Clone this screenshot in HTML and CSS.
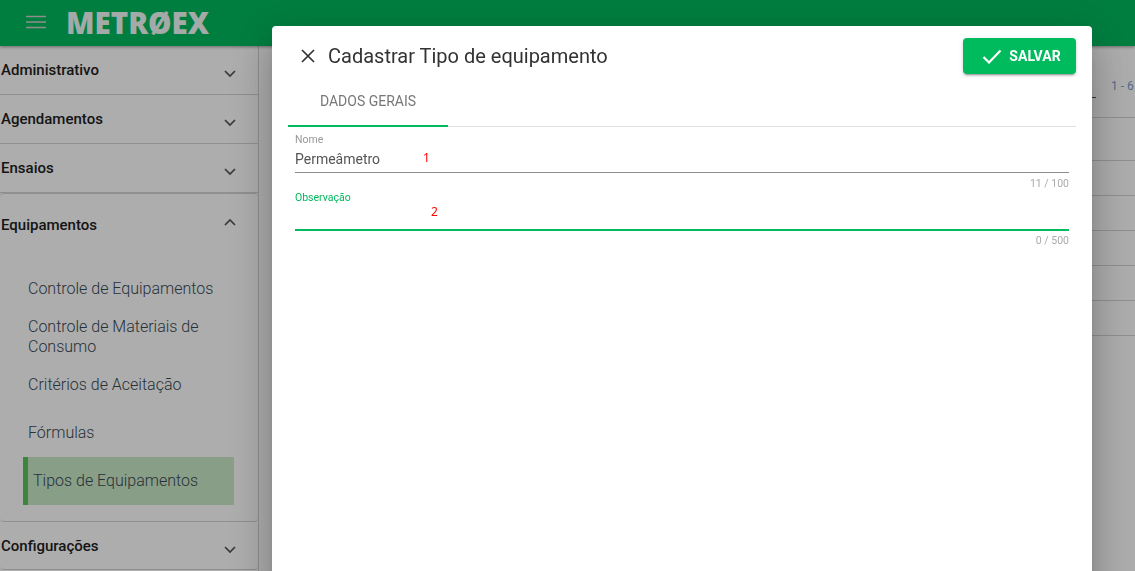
FILE: index.html
```html
<!DOCTYPE html>
<html lang="pt-BR">
<head>
    <meta charset="UTF-8">
    <title>Metroex</title>
    <link rel="stylesheet" href="styles.css">
</head>
<body>
    <header class="topbar">
        <svg class="menu-icon" width="20" height="14" viewBox="0 0 20 14"><path d="M0 1.500h20M0 7h20M0 12.500h20" stroke="#d0d0d0" stroke-width="1.600"/></svg>
        <span class="logo">METRØEX</span>
    </header>

    <div class="page">
        <nav class="sidebar">
            <div class="panel">
                <span>Administrativo</span>
                <svg class="chevron" width="12" height="8" viewBox="0 0 12 8"><path d="M1 1l5 5 5-5" /></svg>
            </div>
            <div class="panel">
                <span>Agendamentos</span>
                <svg class="chevron" width="12" height="8" viewBox="0 0 12 8"><path d="M1 1l5 5 5-5" /></svg>
            </div>
            <div class="panel">
                <span>Ensaios</span>
                <svg class="chevron" width="12" height="8" viewBox="0 0 12 8"><path d="M1 1l5 5 5-5" /></svg>
            </div>
            <div class="panel-open">
                <div class="panel-head">
                    <span>Equipamentos</span>
                    <svg class="chevron up" width="12" height="8" viewBox="0 0 12 8"><path d="M1 7l5-5 5 5" /></svg>
                </div>
                <a class="sub-item first">Controle de Equipamentos</a>
                <a class="sub-item double">Controle de Materiais de Consumo</a>
                <a class="sub-item">Critérios de Aceitação</a>
                <a class="sub-item">Fórmulas</a>
                <a class="sub-item active">Tipos de Equipamentos</a>
            </div>
            <div class="panel last">
                <span>Configurações</span>
                <svg class="chevron" width="12" height="8" viewBox="0 0 12 8"><path d="M1 1l5 5 5-5" /></svg>
            </div>
        </nav>

        <main class="content">
            <div class="pager">
                <span class="pager-select"></span>
                <span class="pager-text">1 - 6</span>
            </div>
            <div class="row row-head"></div>
            <div class="row"></div>
            <div class="row"></div>
            <div class="row"></div>
            <div class="row"></div>
            <div class="row"></div>
        </main>
    </div>

    <div class="backdrop"></div>

    <div class="dialog">
        <div class="dialog-head">
            <svg class="close-icon" width="14" height="14" viewBox="0 0 14 14"><path d="M1 1l12 12M13 1L1 13" stroke="#333" stroke-width="1.700"/></svg>
            <h2>Cadastrar Tipo de equipamento</h2>
            <button class="save-btn">
                <svg width="20" height="15" viewBox="0 0 20 15"><path d="M1.500 8l5.500 5.500L18.500 1.500" fill="none" stroke="#fff" stroke-width="2.200"/></svg>
                SALVAR
            </button>
        </div>

        <div class="tabs">
            <div class="tab">DADOS GERAIS</div>
        </div>

        <div class="form">
            <div class="field">
                <label>Nome</label>
                <div class="value">Permeâmetro</div>
                <span class="note note-one">1</span>
            </div>
            <div class="hint">11 / 100</div>
            <div class="field focused">
                <label>Observação</label>
                <div class="value"></div>
                <span class="note note-two">2</span>
            </div>
            <div class="hint">0 / 500</div>
        </div>
    </div>
</body>
</html>
```

FILE: styles.css
```css
* {
    box-sizing: border-box;
}

html, body {
    height: 100%;
}

body {
    margin: 0;
    overflow: hidden;
    background: #fff;
    font-family: Roboto, "Liberation Sans", sans-serif;
    color: #212121;
}

/* Top bar */
.topbar {
    height: 46px;
    background: #00ba5e;
    display: flex;
    align-items: center;
    padding-left: 26px;
    box-shadow: 0 1px 3px rgba(0, 0, 0, 0.4);
    position: relative;
}

.menu-icon {
    margin-right: 22px;
    margin-top: -2px;
}

.logo {
    font-family: "Open Sans", sans-serif;
    font-weight: 800;
    font-size: 29.500px;
    margin-left: -2px;
    margin-top: -2px;
    color: #fff;
    opacity: 0.95;
}

/* Sidebar */
.page {
    display: flex;
    height: 525px;
}

.sidebar {
    width: 259px;
    border-right: 1px solid #d4d4d4;
    padding-top: 1px;
    flex-shrink: 0;
}

.panel {
    height: 48px;
    display: flex;
    justify-content: space-between;
    align-items: center;
    padding: 0 22px 1px 1px;
    border-bottom: 1px solid #d4d4d4;
    font-size: 15px;
    font-weight: 500;
    margin-bottom: 1px;
}

.panel.last {
    border-radius: 0 0 4px 4px;
    margin: 0;
    padding: 1px 22px 0 1px;
}

.chevron {
    margin-top: 7px;
}

.chevron path {
    fill: none;
    stroke: #555;
    stroke-width: 1.700;
}

.chevron.up {
    margin-top: -6px;
}

.panel-open {
    height: 329px;
    border-radius: 4px;
    border-bottom: 1px solid #d4d4d4;
    border-top: 1px solid #d4d4d4;
    margin-top: -1px;
}

.panel-head {
    height: 62px;
    display: flex;
    justify-content: space-between;
    align-items: center;
    padding: 0 22px 0 1px;
    font-size: 15px;
    font-weight: 500;
}

.sub-item {
    display: block;
    margin-left: 28px;
    width: 200px;
    font-size: 16px;
    font-weight: 300;
    line-height: 20px;
    color: #3a4a55;
    height: 48px;
    padding-top: 14px;
}

.sub-item.first {
    margin-top: 9px;
    height: 28px;
    padding-top: 14px;
    box-sizing: content-box;
}

.sub-item.double {
    height: 54px;
    padding-top: 10px;
}

.sub-item.active {
    margin-left: 23px;
    width: 211px;
    background: #cbe9c8;
    border-left: 5px solid #58c658;
    padding-left: 5px;
}

/* Table behind the dialog */
.content {
    flex: 1;
    padding-left: 14px;
}

.pager {
    height: 72px;
    border-bottom: 1px solid #d4d4d4;
    position: relative;
}

.pager-select {
    position: absolute;
    right: 39px;
    top: 0;
    width: 60px;
    height: 52px;
    border-bottom: 1px solid #555;
}

.pager-text {
    position: absolute;
    left: 838px;
    top: 33px;
    font-size: 12px;
    color: #7a9fd0;
    white-space: nowrap;
}

.row {
    height: 35px;
    border-bottom: 1px solid #d4d4d4;
}

.row-head {
    height: 43px;
}

/* Modal layers */
.backdrop {
    position: fixed;
    top: 0;
    right: 0;
    bottom: 0;
    left: 0;
    background: rgba(0, 0, 0, 0.32);
}

.dialog {
    position: fixed;
    left: 272px;
    top: 26px;
    width: 820px;
    height: 600px;
    background: #fff;
    border-radius: 4px;
    padding: 12px 16px 0;
    box-shadow: 0 11px 15px -7px rgba(0, 0, 0, 0.2), 0 24px 38px 3px rgba(0, 0, 0, 0.14), 0 9px 46px 8px rgba(0, 0, 0, 0.12);
}

.dialog-head {
    display: flex;
    align-items: center;
    height: 36px;
}

.close-icon {
    margin-left: 13px;
    margin-right: 13px;
}

.dialog-head h2 {
    margin: 0;
    font-size: 20px;
    font-weight: 400;
    color: #333;
    flex: 1;
}

.save-btn {
    width: 113px;
    height: 36px;
    border: 0;
    border-radius: 4px;
    background: #00ba5e;
    color: #fff;
    font-family: Roboto, sans-serif;
    font-size: 14px;
    font-weight: 700;
    display: flex;
    align-items: center;
    justify-content: center;
    gap: 7px;
    padding: 0 0 0 4px;
    box-shadow: 0 3px 1px -2px rgba(0, 0, 0, 0.2), 0 2px 2px 0 rgba(0, 0, 0, 0.14), 0 1px 5px 0 rgba(0, 0, 0, 0.12);
}

.tabs {
    height: 51px;
    border-bottom: 1px solid #e0e0e0;
    margin-top: 2px;
}

.tab {
    width: 160px;
    height: 51px;
    border-bottom: 2px solid #00ba5e;
    font-size: 14px;
    color: #777;
    text-align: center;
    padding-top: 17px;
    line-height: 16px;
}

.form {
    padding: 7px 7px 0;
}

.field {
    position: relative;
    height: 39px;
    border-bottom: 1px solid #8c8c8c;
}

.field label {
    display: block;
    font-size: 10.5px;
    line-height: 12px;
    color: #999;
}

.field .value {
    font-size: 14px;
    line-height: 16px;
    margin-top: 5px;
    color: #555;
}

.field.focused {
    margin-top: 2px;
    border-bottom: 2px solid #00ba5e;
}

.field.focused label {
    color: #00ba5e;
}

.note {
    position: absolute;
    font-family: "Noto Sans", sans-serif;
    font-size: 12px;
    line-height: 16px;
    color: #ff0000;
}

.note-one {
    left: 128px;
    top: 16px;
}

.note-two {
    left: 136px;
    top: 12px;
}

.hint {
    font-size: 10.5px;
    line-height: 12px;
    color: #aaa;
    text-align: right;
    margin-top: 5px;
}

.field.focused + .hint {
    margin-top: 4px;
}
```
